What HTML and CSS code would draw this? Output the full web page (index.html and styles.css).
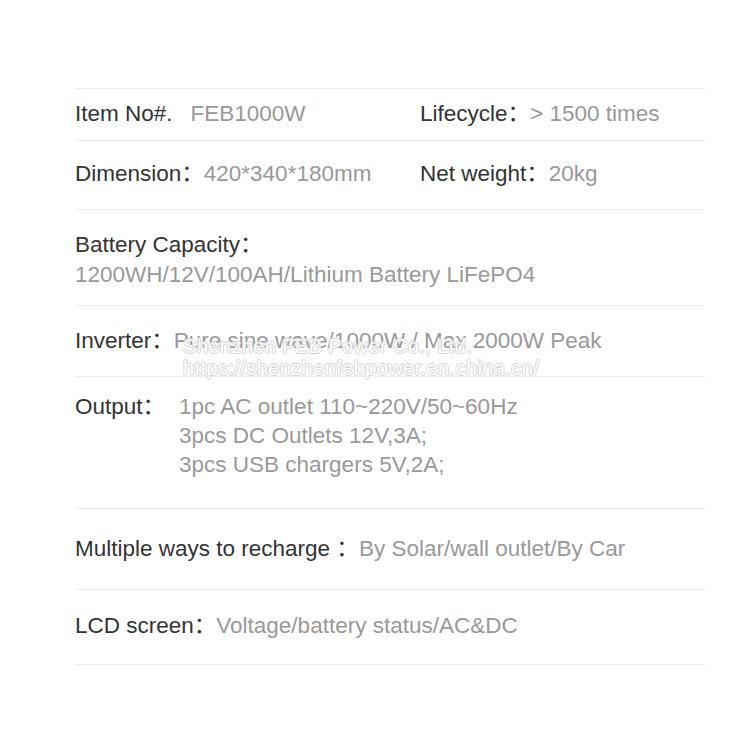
FILE: index.html
```html
<!DOCTYPE html>
<html lang="en">
<head>
    <meta charset="UTF-8">
    <meta name="viewport" content="width=device-width, initial-scale=1.0">
    <title>FEB1000W Specifications</title>
    <link rel="stylesheet" href="styles.css">
</head>
<body>
    <div class="spec-sheet">
        <!-- Item / Lifecycle -->
        <div class="spec-row spec-pair row-item">
            <div><span class="label">Item No#.</span><span class="value value-item">FEB1000W</span></div>
            <div><span class="label">Lifecycle：</span><span class="value">&gt; 1500 times</span></div>
        </div>

        <!-- Dimension / Weight -->
        <div class="spec-row spec-pair row-dimension">
            <div><span class="label">Dimension：</span><span class="value">420*340*180mm</span></div>
            <div><span class="label">Net weight：</span><span class="value">20kg</span></div>
        </div>

        <!-- Battery -->
        <div class="spec-row row-battery">
            <div class="label">Battery Capacity：</div>
            <div class="value">1200WH/12V/100AH/Lithium Battery LiFePO4</div>
        </div>

        <!-- Inverter -->
        <div class="spec-row row-inverter">
            <span class="label">Inverter：</span><span class="value">Pure sine wave/1000W / Max 2000W Peak</span>
        </div>

        <!-- Output -->
        <div class="spec-row row-output">
            <div class="label">Output：</div>
            <div class="value output-list">
                <div>1pc AC outlet 110~220V/50~60Hz</div>
                <div>3pcs DC Outlets 12V,3A;</div>
                <div>3pcs USB chargers 5V,2A;</div>
            </div>
        </div>

        <!-- Recharge -->
        <div class="spec-row row-recharge">
            <span class="label">Multiple ways to recharge ：</span><span class="value">By Solar/wall outlet/By Car</span>
        </div>

        <!-- LCD -->
        <div class="spec-row row-lcd">
            <span class="label">LCD screen：</span><span class="value">Voltage/battery status/AC&amp;DC</span>
        </div>

        <div class="watermark">
            <div>Shenzhen FEB Power Co., Ltd.</div>
            <div>https://shenzhenfebpower.en.china.cn/</div>
        </div>
    </div>
</body>
</html>
```

FILE: styles.css
```css
:root {
    --text-main: #333333;
    --text-dim: #999999;
    --border: #ececec;
}

body {
    background: #ffffff;
    color: var(--text-main);
    font-family: 'Liberation Sans', 'Noto Sans CJK SC', sans-serif;
    margin: 0;
}

.spec-sheet {
    position: relative;
    width: 630px;
    margin: 88px 0 0 75px;
    font-size: 22.5px;
    line-height: 28px;
    border-bottom: 1px solid var(--border);
}

.spec-row {
    border-top: 1px solid var(--border);
}

.spec-pair {
    display: grid;
    grid-template-columns: 345px 1fr;
}

.label {
    color: var(--text-main);
}

.value {
    color: var(--text-dim);
}

.value-item {
    margin-left: 18px;
}

.row-item {
    padding: 11px 0 12px;
}

.row-dimension {
    padding: 19px 0 21px;
}

.row-battery {
    padding: 20px 0 15px;
    line-height: 30px;
}

.row-inverter {
    padding: 21px 0 21px;
}

.row-output {
    display: flex;
    gap: 14px;
    padding: 15px 0 29px;
    line-height: 29px;
}

.row-recharge {
    padding: 26px 0 26px;
}

.row-lcd {
    padding: 22px 0 24px;
}

.watermark {
    position: absolute;
    left: 108px;
    top: 247px;
    font-size: 20px;
    line-height: 22px;
    letter-spacing: 0.4px;
    color: #ffffff;
    opacity: 0.85;
    text-shadow: 1px 0 #d0d0d0, -1px 0 #d0d0d0, 0 1px #d0d0d0, 0 -1px #d0d0d0;
    pointer-events: none;
}
```
